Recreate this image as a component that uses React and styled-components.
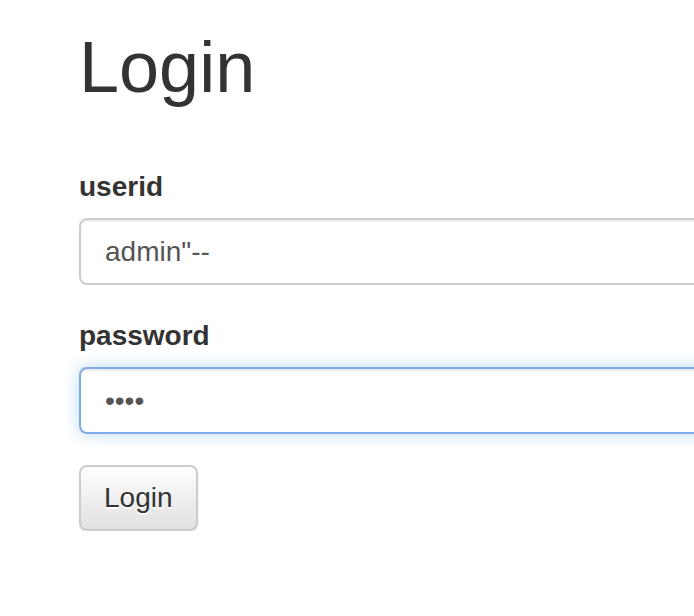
import React from "react";
import styled, { createGlobalStyle } from "styled-components";

const GlobalStyle = createGlobalStyle`
  html, body {
    margin: 0;
    padding: 0;
    background: #fff;
    overflow: hidden;
  }
  body {
    font-family: "Liberation Sans", Arial, sans-serif;
    color: #333;
  }
`;

const App = () => {
  return (
    <>
      <GlobalStyle />
      <Page>
        <Title>Login</Title>
        <LoginForm onSubmit={(e) => e.preventDefault()}>
          <FormGroup>
            <Label htmlFor="userid">userid</Label>
            <Input id="userid" type="text" defaultValue={'admin"--'} />
          </FormGroup>
          <FormGroup>
            <Label htmlFor="password">password</Label>
            <Input id="password" type="password" defaultValue="1234" $focused />
          </FormGroup>
          <Button type="submit">Login</Button>
        </LoginForm>
      </Page>
    </>
  );
};

//Styled components
const Page = styled.div`
  display: flex;
  flex-direction: column;
  align-items: flex-start;
  width: 1100px;
  padding: 28px 0 0 79px;
  box-sizing: border-box;
`;

const Title = styled.h1`
  margin: 0;
  font-size: 72px;
  font-weight: 500;
  line-height: 79px;
  color: #333;
`;

const LoginForm = styled.form`
  display: flex;
  flex-direction: column;
  align-items: flex-start;
  row-gap: 31px;
  width: 100%;
  margin-top: 60px;
`;

const FormGroup = styled.div`
  display: flex;
  flex-direction: column;
  width: 100%;
  row-gap: 11px;
`;

const Label = styled.label`
  font-size: 28px;
  font-weight: 700;
  line-height: 40px;
  color: #333;
`;

const Input = styled.input`
  box-sizing: border-box;
  width: 100%;
  height: 67px;
  padding: 12px 24px;
  font-family: "Liberation Sans", Arial, sans-serif;
  font-size: 28px;
  line-height: 40px;
  color: #555;
  background: #fff;
  border: 2px solid ${(p) => (p.$focused ? "#7eaae6" : "#ccc")};
  border-radius: 8px;
  outline: none;
  box-shadow: ${(p) =>
    p.$focused
      ? "inset 0 2px 2px rgba(0,0,0,.075), 0 0 16px rgba(102,175,233,.45)"
      : "inset 0 2px 2px rgba(0,0,0,.075)"};
`;

const Button = styled.button`
  box-sizing: border-box;
  height: 66px;
  padding: 0 23px;
  font-family: "Liberation Sans", Arial, sans-serif;
  font-size: 28px;
  line-height: 40px;
  color: #333;
  text-shadow: 0 2px 0 #fff;
  background-image: linear-gradient(to bottom, #fff 0, #e0e0e0 100%);
  border: 2px solid #ccc;
  border-radius: 8px;
  box-shadow: inset 0 2px 0 rgba(255,255,255,.15), 0 2px 2px rgba(0,0,0,.075);
  cursor: pointer;
`;

export default App;
